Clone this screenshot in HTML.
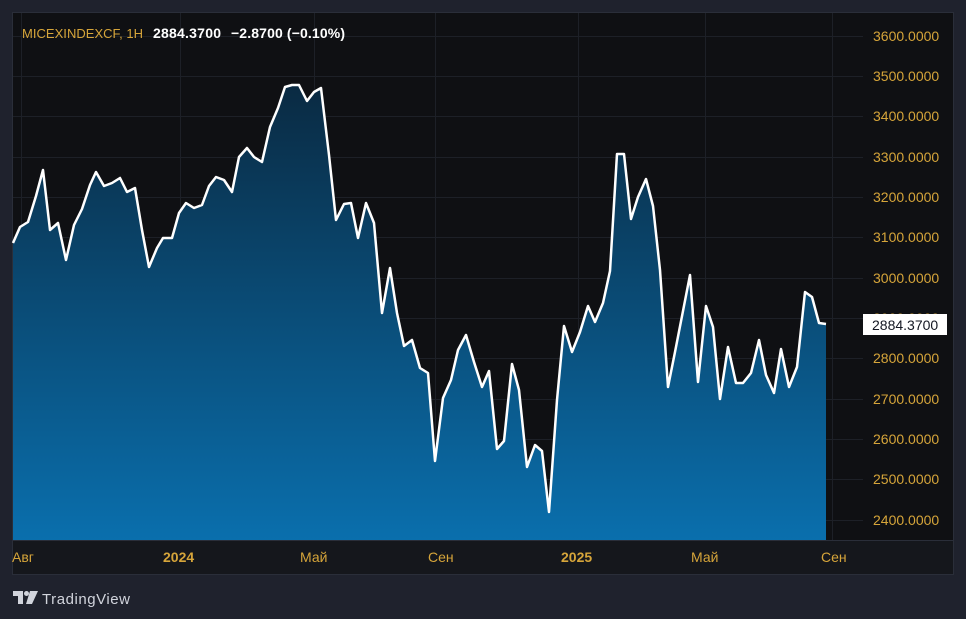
<!DOCTYPE html>
<html><head><meta charset="utf-8"><style>
html,body{margin:0;padding:0;background:#1f222d;width:966px;height:619px;overflow:hidden;font-family:"Liberation Sans",sans-serif}
</style></head><body>
<svg width="966" height="619" viewBox="0 0 966 619" xmlns="http://www.w3.org/2000/svg" style="position:absolute;left:0;top:0">
<defs><linearGradient id="g" x1="0" y1="85" x2="0" y2="540" gradientUnits="userSpaceOnUse">
<stop offset="0" stop-color="#0a2a42"/><stop offset="1" stop-color="#0a6fad"/></linearGradient></defs>
<rect x="12" y="12" width="942" height="563" fill="#2a2e39"/>
<rect x="13" y="13" width="940" height="561" fill="#0f1013"/>
<g stroke="#1d2027" stroke-width="1">
<line x1="13" y1="36.5" x2="863" y2="36.5"/><line x1="13" y1="76.5" x2="863" y2="76.5"/><line x1="13" y1="116.5" x2="863" y2="116.5"/><line x1="13" y1="157.5" x2="863" y2="157.5"/><line x1="13" y1="197.5" x2="863" y2="197.5"/><line x1="13" y1="237.5" x2="863" y2="237.5"/><line x1="13" y1="278.5" x2="863" y2="278.5"/><line x1="13" y1="318.5" x2="863" y2="318.5"/><line x1="13" y1="358.5" x2="863" y2="358.5"/><line x1="13" y1="399.5" x2="863" y2="399.5"/><line x1="13" y1="439.5" x2="863" y2="439.5"/><line x1="13" y1="479.5" x2="863" y2="479.5"/><line x1="13" y1="520.5" x2="863" y2="520.5"/>
<line x1="21.5" y1="13" x2="21.5" y2="540"/><line x1="180.5" y1="13" x2="180.5" y2="540"/><line x1="314.5" y1="13" x2="314.5" y2="540"/><line x1="435.5" y1="13" x2="435.5" y2="540"/><line x1="578.5" y1="13" x2="578.5" y2="540"/><line x1="705.5" y1="13" x2="705.5" y2="540"/><line x1="832.5" y1="13" x2="832.5" y2="540"/>
</g>
<polygon fill="url(#g)" points="13,540 13,243 20,227 28,222 36,196 43,170 50,230 58,223 66,260 74,225 82,209 90,185 96,172 104,186 112,183 120,178 127,192 135,188 142,230 149,267 157,248 163,238 172,238 179,213 186,203 194,208 202,205 209,186 216,177 224,180 232,192 239,157 247,148 254,157 262,162 270,127 278,108 285,87 292,85 299,85 307,101 314,92 321,88 329,155 336,220 344,204 351,203 358,238 366,203 374,223 382,313 390,268 397,313 404,346 412,340 420,368 428,373 435,461 443,398 451,380 458,350 466,335 474,362 482,387 489,371 497,449 504,441 512,364 519,390 527,467 535,445 542,451 549,512 557,400 564,326 572,352 580,332 588,306 595,322 603,303 610,271 617,154 624,154 631,219 638,197 646,179 653,206 660,270 668,387 675,352 683,311 690,275 698,382 706,306 713,327 720,399 728,347 736,383 743,383 751,373 759,340 766,375 774,393 781,349 789,387 797,367 805,292 812,297 819,323 826,324 826,540"/>
<polyline fill="none" stroke="#fff" stroke-width="2.5" stroke-linejoin="round" points="13,243 20,227 28,222 36,196 43,170 50,230 58,223 66,260 74,225 82,209 90,185 96,172 104,186 112,183 120,178 127,192 135,188 142,230 149,267 157,248 163,238 172,238 179,213 186,203 194,208 202,205 209,186 216,177 224,180 232,192 239,157 247,148 254,157 262,162 270,127 278,108 285,87 292,85 299,85 307,101 314,92 321,88 329,155 336,220 344,204 351,203 358,238 366,203 374,223 382,313 390,268 397,313 404,346 412,340 420,368 428,373 435,461 443,398 451,380 458,350 466,335 474,362 482,387 489,371 497,449 504,441 512,364 519,390 527,467 535,445 542,451 549,512 557,400 564,326 572,352 580,332 588,306 595,322 603,303 610,271 617,154 624,154 631,219 638,197 646,179 653,206 660,270 668,387 675,352 683,311 690,275 698,382 706,306 713,327 720,399 728,347 736,383 743,383 751,373 759,340 766,375 774,393 781,349 789,387 797,367 805,292 812,297 819,323 826,324"/>
<rect x="13" y="540" width="940" height="34" fill="#15171c"/>
<line x1="13" y1="540.5" x2="953" y2="540.5" stroke="#2a2e39"/>
<g font-size="14" fill="#d6a53a">
<text x="873" y="41">3600.0000</text><text x="873" y="81">3500.0000</text><text x="873" y="121">3400.0000</text><text x="873" y="162">3300.0000</text><text x="873" y="202">3200.0000</text><text x="873" y="242">3100.0000</text><text x="873" y="283">3000.0000</text><text x="873" y="323">2900.0000</text><text x="873" y="363">2800.0000</text><text x="873" y="404">2700.0000</text><text x="873" y="444">2600.0000</text><text x="873" y="484">2500.0000</text><text x="873" y="525">2400.0000</text>
<text x="12" y="562">Авг</text><text x="163" y="562" font-weight="bold">2024</text><text x="300" y="562">Май</text><text x="428" y="562">Сен</text><text x="561" y="562" font-weight="bold">2025</text><text x="691" y="562">Май</text><text x="821" y="562">Сен</text>
</g>
<rect x="863" y="314" width="84" height="21" fill="#fff"/>
<text x="872" y="330" font-size="14" fill="#131722">2884.3700</text>
<text x="22" y="38" font-size="13" fill="#d6a53a" textLength="121">MICEXINDEXCF, 1H</text>
<text x="153" y="38" font-size="14" fill="#fff" font-weight="bold" textLength="68">2884.3700</text>
<text x="231" y="38" font-size="14" fill="#fff" font-weight="bold" textLength="114">−2.8700 (−0.10%)</text>
<g fill="#d1d4dc"><path d="M13,591 h10 v13 h-5 v-8 h-5z"/><circle cx="26.5" cy="593.5" r="2.5"/><path d="M30,591 h8 l-6,13 h-6z"/></g>
<text x="42" y="604" font-size="15" fill="#d1d4dc" textLength="88">TradingView</text>
</svg>
</body></html>
